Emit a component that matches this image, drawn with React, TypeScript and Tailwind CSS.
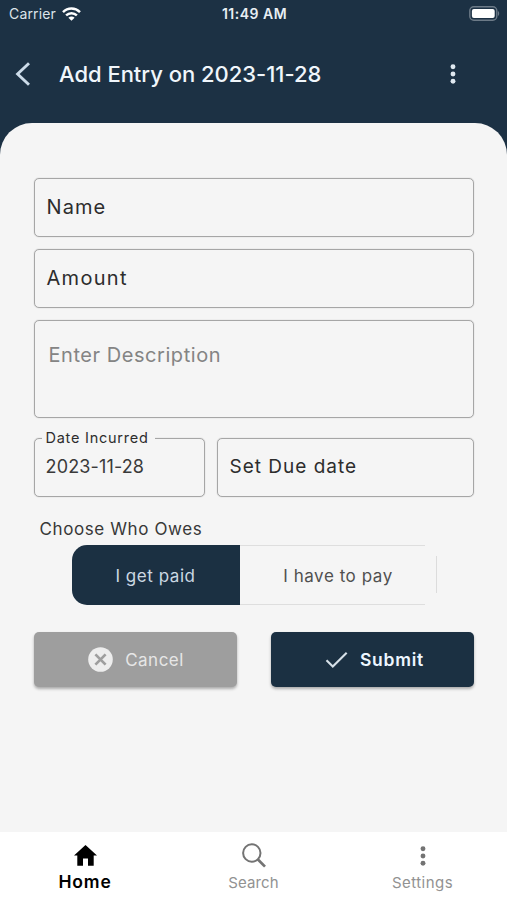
import { useState } from "react";
import type { ReactNode } from "react";
import clsx from "clsx";

const FIELD = "flex items-center rounded-[5px] border border-[#a6a6a6] shadow-[0_0_1px_#a0a0a0] text-[#2d2d2d] whitespace-nowrap";

function StatusBar() {
  return (
    <div className="grid h-[27px] grid-cols-3 items-center pl-[9px] pr-[7px] text-[14px]">
      <div className="flex items-center gap-[6px] text-[#dde4ea]">
        <span className="tracking-[0.15px]">Carrier</span>
        <svg width="19" height="14" viewBox="0 0 19 14" fill="none" stroke="white" strokeWidth="2.5">
          <path d="M1 5.1C5.8 0.4 13.2 0.4 18 5.1" />
          <path d="M4.1 8.4C7.2 5.5 11.8 5.5 14.9 8.4" />
          <path d="M9.5 13.8L6.4 10.7C8.2 9.1 10.8 9.1 12.6 10.7Z" fill="white" stroke="none" />
        </svg>
      </div>
      <span className="whitespace-nowrap text-center text-[14px] font-semibold tracking-[0.5px] text-[#e8eef3]">11:49 AM</span>
      <svg className="justify-self-end" width="31" height="15" viewBox="0 0 31 15">
        <rect x="0.8" y="0.8" width="27" height="13.4" rx="4" fill="none" stroke="#6c7a87" strokeWidth="1.4" />
        <rect x="2.9" y="2.9" width="22.8" height="9.2" rx="2" fill="white" />
        <path d="M29 5V10C30.6 9.3 30.6 5.7 29 5Z" fill="#6c7a87" />
      </svg>
    </div>
  );
}

function Dots({ className }: { className?: string }) {
  return (
    <svg width="6" height="20" viewBox="0 0 6 20" fill="currentColor" className={className}>
      <circle cx="3" cy="2.7" r="2.45" />
      <circle cx="3" cy="10" r="2.45" />
      <circle cx="3" cy="17.3" r="2.45" />
    </svg>
  );
}

function Header() {
  return (
    <div className="flex h-24 items-center pb-[2px] pl-[15px] pr-[51px]">
      <svg width="16" height="24" viewBox="0 0 16 24" fill="none" stroke="#ccdbe9" strokeWidth="2.9">
        <path d="M14 1.2L2.6 12L14 22.8" />
      </svg>
      <h1 className="ml-7 flex-1 whitespace-nowrap text-[22px] font-medium tracking-[-0.02px] text-[#f0f6fb]">
        Add Entry on 2023-11-28
      </h1>
      <Dots className="text-[#dfe8f0]" />
    </div>
  );
}

function TabItem({ label, active, onClick, children }: { label: ReactNode; active?: boolean; onClick: () => void; children: ReactNode }) {
  return (
    <button onClick={onClick} className={clsx("flex flex-1 flex-col items-center", active ? "text-black" : "text-[#737373]")}>
      <span className="flex h-[25px] items-center">{children}</span>
      {label}
    </button>
  );
}

export default function App() {
  const [payer, setPayer] = useState("me");
  const [tab, setTab] = useState("home");

  return (
    <div className="flex h-[900px] w-[507px] flex-col overflow-hidden bg-[#1c3144] font-['Inter','Liberation_Sans',sans-serif]">
      <StatusBar />
      <Header />

      <main className="flex flex-1 flex-col rounded-t-[32px] bg-[#f5f5f5] px-[33.5px] pt-[55px]">
        <div className="flex flex-col gap-3">
          <div className={clsx(FIELD, "h-[59px] px-3 pb-[2px] text-[20px] tracking-[1.1px]")}>Name</div>
          <div className={clsx(FIELD, "h-[59px] px-3 pb-[2px] text-[20px] tracking-[1.3px]")}>Amount</div>
          <div className={clsx(FIELD, "h-[98px] items-start px-[14px] pt-[19px] text-[20px] tracking-[0.55px]")}>
            <span className="text-[#848484]">Enter Description</span>
          </div>
        </div>

        <div className="mt-5 flex gap-3">
          <div className={clsx(FIELD, "relative h-[59px] w-[171px] px-[11px] text-[18px] tracking-[0.15px]")}>
            <span className="absolute -top-[11px] left-[7px] bg-[#f5f5f5] pl-1 pr-[6px] text-[14.5px] leading-5 tracking-[0.75px]">
              Date Incurred
            </span>
            <span className="-mt-[2px] text-[#3a3a3a]">2023-11-28</span>
          </div>
          <div className={clsx(FIELD, "h-[59px] flex-1 px-3 text-[19px] tracking-[1px]")}>Set Due date</div>
        </div>

        <p className="ml-[6px] mt-[20px] h-6 text-[17px] leading-6 tracking-[0.6px] text-[#383838]">Choose Who Owes</p>

        <div className="ml-[38px] mt-1 flex h-[60px] w-[365px] text-[17px] tracking-[0.55px]">
          <button
            onClick={() => setPayer("me")}
            className={clsx("w-[168px] rounded-l-[15px] pt-[3px]", payer === "me" ? "bg-[#1b3042] text-[#cbd8e3]" : "text-[#505050]")}
          >
            I get paid
          </button>
          <div className="relative flex-1">
            <button
              onClick={() => setPayer("them")}
              className={clsx(
                "mr-[12px] h-full w-[185px] border-y border-[#dedede] pt-[3px]",
                payer === "them" ? "bg-[#1b3042] text-[#cbd8e3]" : "text-[#505050]"
              )}
            >
              <span className="pl-3">I have to pay</span>
            </button>
            {/* detached right edge of the segmented control */}
            <span className="absolute right-0 top-[11px] h-[37px] w-px bg-[#dcdcdc]" />
          </div>
        </div>

        <div className="mt-[27px] flex justify-between">
          <button className="flex h-[55px] w-[203px] items-center justify-center gap-3 rounded-[5px] bg-[#9e9e9e] pl-[2px] text-[17px] tracking-[0.5px] text-[#e6e6e6] shadow-[0_2px_3px_rgba(0,0,0,0.3)]">
            <svg width="25" height="25" viewBox="0 0 25 25">
              <circle cx="12.5" cy="12.5" r="12.3" fill="#ededed" />
              <path d="M7.4 7.4L17.6 17.6M17.6 7.4L7.4 17.6" stroke="#9e9e9e" strokeWidth="2.7" />
            </svg>
            <span className="pt-[2px]">Cancel</span>
          </button>
          <button className="flex h-[55px] w-[203px] items-center justify-center gap-3 rounded-[5px] bg-[#1b3042] pl-[5px] text-[17.5px] font-semibold tracking-[0.75px] text-[#edf6ff] shadow-[0_2px_3px_rgba(0,0,0,0.3)]">
            <svg width="23" height="18" viewBox="0 0 23 18" fill="none" stroke="#d6e0e8" strokeWidth="2.1">
              <path d="M1.5 9.3L7.8 15.6L21.7 1.8" />
            </svg>
            <span className="pt-[2px]">Submit</span>
          </button>
        </div>
      </main>

      <nav className="flex h-[68px] bg-white pt-[11px]">
        <TabItem
          active={tab === "home"}
          onClick={() => setTab("home")}
          label={<span className="mt-[2px] pl-px text-[17.5px] font-semibold leading-6 tracking-[0.85px]">Home</span>}
        >
          <svg width="23" height="21" viewBox="0 0 23 21" fill="currentColor" className="ml-px">
            <path d="M11.5 0L23 10.4H19.7V20.7H14V13.5H9V20.7H3.3V10.4H0Z" />
          </svg>
        </TabItem>
        <TabItem
          active={tab === "search"}
          onClick={() => setTab("search")}
          label={<span className="mt-[3px] text-[15px] leading-6 tracking-[0.1px] text-[#929292]">Search</span>}
        >
          <svg width="24" height="25" viewBox="0 0 24 25" fill="none" stroke="currentColor">
            <circle cx="9.8" cy="10" r="8.7" strokeWidth="2" />
            <path d="M15.7 16.2L23 23.6" strokeWidth="2.7" />
          </svg>
        </TabItem>
        <TabItem
          active={tab === "settings"}
          onClick={() => setTab("settings")}
          label={<span className="mt-[3px] text-[15px] leading-6 tracking-[0.45px] text-[#929292]">Settings</span>}
        >
          <Dots />
        </TabItem>
      </nav>
    </div>
  );
}
